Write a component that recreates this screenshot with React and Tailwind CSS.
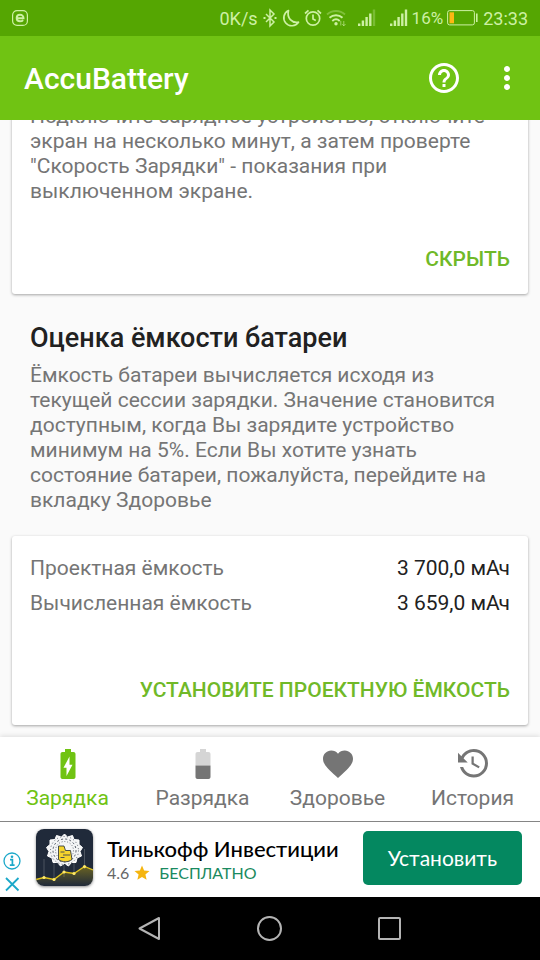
import {
    MdBattery50,
    MdBatteryChargingFull,
    MdFavorite,
    MdHelpOutline,
    MdMoreVert,
    MdStar,
} from 'react-icons/md';

const capacityRows = [
    { label: 'Проектная ёмкость', value: '3 700,0 мАч' },
    { label: 'Вычисленная ёмкость', value: '3 659,0 мАч' },
];

function HistoryIcon({ className }) {
    return (
        <svg viewBox="0 0 24 24" fill="currentColor" className={className} aria-hidden>
            <path d="M11 7v5.110l4.710 2.790.79-1.280-4-2.370V7M12.500 2C8.970 2 5.910 3.920 4.270 6.770L2 4.500V11h6.500L5.750 8.250C6.960 5.730 9.500 4 12.500 4a7.500 7.500 0 0 1 0 15c-3.270 0-6.030-2.090-7.060-5h-2.100c1.100 4.030 4.770 7 9.160 7a9.500 9.500 0 0 0 0-19Z" />
        </svg>
    );
}

const tabs = [
    { label: 'Зарядка', Icon: MdBatteryChargingFull, active: true },
    { label: 'Разрядка', Icon: MdBattery50 },
    { label: 'Здоровье', Icon: MdFavorite },
    { label: 'История', Icon: HistoryIcon },
];

function SignalIcon({ weak }) {
    return (
        <svg viewBox="0 0 18 18" className="size-[18px]" fill="currentColor" aria-hidden>
            <rect x="0" y="14.500" width="2.400" height="2.500" />
            <rect x="3.700" y="11.500" width="2.400" height="5.500" />
            <rect x="7.400" y="8" width="2.400" height="9" />
            <rect x="11.100" y="4.500" width="2.400" height="12.500" />
            <rect x="14.800" y="0.500" width="2.400" height="16.500" opacity={weak ? 0.3 : 1} />
        </svg>
    );
}

function StatusBar() {
    return (
        <div className="flex h-9 shrink-0 items-center justify-between bg-[#55a602] px-3 text-[#cdf0a4]">
            <svg viewBox="0 0 16 16" className="size-4" fill="none" stroke="currentColor" aria-hidden>
                <rect x="0.600" y="0.600" width="14.800" height="14.800" rx="4.500" strokeWidth="1.200" />
                <path d="M4.500 8.300h7C11.500 5.900 10 4.700 8 4.700S4.700 6.100 4.700 8 6.100 11.300 8 11.300c1.300 0 2.400-.4 3.100-1.200" strokeWidth="2" />
            </svg>

            <div className="flex items-center">
                <span className="text-[18px]">0K/s</span>
                <svg viewBox="0 0 16 20" className="ml-1 h-5 w-4" fill="none" stroke="currentColor" strokeWidth="1.500" aria-hidden>
                    <path d="M4 6l8 8-4 4V2l4 4-8 8" />
                    <path d="M1.500 10h2M12.500 10h2" strokeWidth="1.800" />
                </svg>
                <svg viewBox="0 0 18 18" className="ml-1 size-[18px]" fill="none" stroke="currentColor" strokeWidth="1.700" strokeLinejoin="round" aria-hidden>
                    <path d="M6.500 1.500A8 8 0 1 0 16.500 13.200C10 14.500 4.500 9 6.500 1.500Z" />
                </svg>
                <svg viewBox="0 0 18 18" className="ml-1 size-[18px]" fill="none" stroke="currentColor" strokeWidth="1.700" aria-hidden>
                    <circle cx="9" cy="9.500" r="6.700" />
                    <path d="M9 5.500V10l2.800 1.500M1 4.500l3.500-3.200M17 4.500l-3.500-3.200" />
                </svg>
                <svg viewBox="0 0 20 18" className="ml-1 h-[18px] w-5" fill="none" stroke="currentColor" strokeWidth="1.900" aria-hidden>
                    <path d="M1 5.500C6 .8 14 .8 19 5.500" opacity=".35" />
                    <path d="M3.500 8.800c3.700-3.400 9.300-3.400 13 0M6.300 12c2.200-2 5.200-2 7.400 0" />
                    <circle cx="10" cy="14.800" r="1.700" fill="currentColor" stroke="none" />
                    <path d="M14.800 12v4.500M17.800 12v5M16.300 15l1.500 1.800L19.500 15" strokeWidth="1" opacity=".6" />
                </svg>
                <div className="ml-3 flex gap-3.5">
                    <SignalIcon weak />
                    <SignalIcon />
                </div>
                <span className="ml-1 text-[17px]">16%</span>
                <svg viewBox="0 0 32 16" className="ml-1 h-4 w-8" fill="none" aria-hidden>
                    <rect x="0.600" y="0.600" width="26.800" height="14.300" rx="2" stroke="currentColor" strokeWidth="1" />
                    <rect x="2.500" y="2.300" width="4.500" height="11" fill="#fdb813" />
                    <path d="M29.800 3.500v8.500" stroke="currentColor" strokeWidth="1.600" />
                </svg>
                <span className="ml-1 text-[18px]">23:33</span>
            </div>
        </div>
    );
}

function AppBar() {
    return (
        <header className="flex h-[84px] shrink-0 items-center justify-between bg-[#70c313] pr-[15px] pl-6 text-white">
            <h1 className="text-[30px] font-medium">AccuBattery</h1>
            <div className="flex gap-[27px]">
                <button type="button" aria-label="Справка">
                    <MdHelpOutline className="size-9" />
                </button>
                <button type="button" aria-label="Меню">
                    <MdMoreVert className="size-9" />
                </button>
            </div>
        </header>
    );
}

function Card({ action, children }) {
    return (
        <section className="flex shrink-0 flex-col rounded-[3px] bg-white px-[18px] pt-5 pb-[22px] shadow-[0_1px_3px_rgba(0,0,0,0.35)]">
            {children}
            <button type="button" className="self-end text-right font-medium text-[#70b928] uppercase">
                {action}
            </button>
        </section>
    );
}

function TabBar() {
    return (
        <nav className="grid shrink-0 grid-cols-4 border-b border-[#858585] bg-white pt-[9px] pb-2.5 shadow-[0_-1px_5px_rgba(0,0,0,0.12)]">
            {tabs.map(({ label, Icon, active }) => (
                <a
                    key={label}
                    href="#"
                    aria-current={active ? 'page' : undefined}
                    className={
                        active
                            ? 'flex flex-col items-center gap-1 text-[#70c313]'
                            : 'flex flex-col items-center gap-1 text-[#757575]'
                    }
                >
                    <Icon className="size-9" />
                    {label}
                </a>
            ))}
        </nav>
    );
}

function InvestIcon() {
    return (
        <svg viewBox="0 0 57 57" className="size-[57px] shrink-0 rounded-lg shadow-[0_1px_3px_rgba(0,0,0,0.45)]" aria-hidden>
            <defs>
                <linearGradient id="glow" x1="0" y1="0" x2="0" y2="1">
                    <stop offset="0" stopColor="#d8b800" stopOpacity=".4" />
                    <stop offset="1" stopColor="#d8b800" stopOpacity="0" />
                </linearGradient>
            </defs>
            <rect width="57" height="57" fill="#202a3a" />
            <path d="M8 30v20M18 34v18M28 36v12M38 30v16M48.500 20v20" stroke="#69707a" strokeWidth=".6" />
            <path d="M0 50.500l8-2 10 2 10-7.500 10 1.500 10.500-7L57 41v16H0Z" fill="url(#glow)" />
            {/* crest */}
            <path
                d="M28.500 5l3 3 5-1.500 1.500 4 5 .5v4.500l3.500 3-2.500 4 1.500 4.500-4.500 2-1 4.500-4.500 0-3 3.500-4-2.500-4 2.500-3-3.500-4.500 0-1-4.500-4.500-2 1.500-4.500-2.500-4 3.500-3V11l5-.5 1.500-4 5 1.500Z"
                fill="#f4f5f6"
                stroke="#fff"
                strokeWidth="1"
            />
            <g fill="none" stroke="#3c4451">
                <circle cx="28.500" cy="21.500" r="14" strokeWidth=".8" strokeDasharray="1 2.400" />
                <circle cx="28.500" cy="21.500" r="11.500" strokeWidth=".9" strokeDasharray="2 2.200" />
                <circle cx="28.500" cy="21.500" r="9" strokeWidth=".7" strokeDasharray="1 1.800" />
            </g>
            <path d="M22.500 17h5.500l1.500 4.500h5l1.500 9c-4 3-9.500 3-13.500 0Z" fill="#f6d42c" stroke="#202a3a" strokeWidth=".8" />
            <path d="M24.500 23h4M27 26h7M24.500 28.500h4" stroke="#3c4451" strokeWidth=".9" />
            {/* price line */}
            <path d="M0 50.500l8-2 10 2 10-7.500 10 1.500 10.500-7L57 41" fill="none" stroke="#e2c51b" strokeWidth="1.300" />
            <g fill="#ffe96b">
                <circle cx="8" cy="48.500" r="1.600" />
                <circle cx="18" cy="50.500" r="1.600" />
                <circle cx="28" cy="43" r="1.600" />
                <circle cx="38" cy="44.500" r="1.600" />
                <circle cx="48.500" cy="37.500" r="1.600" />
            </g>
        </svg>
    );
}

function AdBanner() {
    return (
        <aside className="flex shrink-0 items-start bg-white pt-[7px] pr-[18px] pb-1 pl-[3px] font-[Lato,Roboto,sans-serif]">
            <div className="flex flex-col gap-[5px] pt-[23px] text-[#1ba8c9]">
                <button type="button" aria-label="Об этом объявлении">
                    <svg viewBox="0 0 18 18" className="size-[18px]" fill="none" stroke="currentColor" aria-hidden>
                        <circle cx="9" cy="9" r="8" strokeWidth="1.300" />
                        <path d="M7 7.700h2.400v5.300M6.800 13.200h4.800" strokeWidth="1.700" />
                        <circle cx="9" cy="4.700" r="1.300" fill="currentColor" stroke="none" />
                    </svg>
                </button>
                <button type="button" aria-label="Закрыть">
                    <svg viewBox="0 0 18 18" className="size-[18px]" stroke="currentColor" strokeWidth="1.800" aria-hidden>
                        <path d="M3 3l12.500 12.500M15.500 3L3 15.500" />
                    </svg>
                </button>
            </div>
            <div className="ml-[15px]">
                <InvestIcon />
            </div>
            <div className="ml-3.5 flex-1 pt-[7px]">
                <div className="text-[22px] leading-[25px] font-medium whitespace-nowrap text-black">
                    Тинькофф Инвестиции
                </div>
                <div className="flex items-center text-[16px] leading-6 text-[#666]">
                    4.6
                    <MdStar className="mx-1 size-[18px] text-[#f5b50f]" />
                    <span className="ml-1 text-[#1a8a60]">БЕСПЛАТНО</span>
                </div>
            </div>
            <button type="button" className="mt-0.5 rounded-[5px] bg-[#048860] px-[25px] py-[15px] text-[21px] leading-6 text-white">
                Установить
            </button>
        </aside>
    );
}

function SystemNav() {
    return (
        <div className="flex h-[63px] shrink-0 items-center justify-center gap-[92px] bg-black text-[#b4b4b4]">
            <button type="button" aria-label="Назад">
                <svg viewBox="0 0 28 28" className="size-7" fill="none" stroke="currentColor" strokeWidth="2" strokeLinejoin="round" aria-hidden>
                    <path d="M3.500 13.500L23 3v21Z" />
                </svg>
            </button>
            <button type="button" aria-label="Домой">
                <svg viewBox="0 0 28 28" className="size-7" fill="none" stroke="currentColor" strokeWidth="2" aria-hidden>
                    <circle cx="13.500" cy="13.500" r="11.500" />
                </svg>
            </button>
            <button type="button" aria-label="Недавние">
                <svg viewBox="0 0 28 28" className="size-7" fill="none" stroke="currentColor" strokeWidth="2" aria-hidden>
                    <rect x="3" y="3" width="21" height="21" rx="1" />
                </svg>
            </button>
        </div>
    );
}

export default function App() {
    return (
        <div className="flex h-screen flex-col bg-[#fafafa] font-[Roboto,sans-serif] text-[21px] leading-[25px] text-[#757575]">
            <StatusBar />
            <AppBar />

            <main className="flex min-h-0 flex-1 flex-col justify-end overflow-hidden px-3 pb-3">
                <Card action="Скрыть">
                    <p className="mb-[43px]">
                        Подключите зарядное устройство, отключите экран на
                        несколько минут, а затем проверте "Скорость Зарядки" -
                        показания при выключенном экране.
                    </p>
                </Card>

                <div className="shrink-0 px-[18px] pt-7 pb-[23px]">
                    <h2 className="mb-[9px] text-[27px] leading-8 font-medium text-[#212121]">
                        Оценка ёмкости батареи
                    </h2>
                    <p>
                        Ёмкость батареи вычисляется исходя из текущей сессии
                        зарядки. Значение становится доступным, когда Вы
                        зарядите устройство минимум на 5%. Если Вы хотите
                        узнать состояние батареи, пожалуйста, перейдите на
                        вкладку Здоровье
                    </p>
                </div>

                <Card action="Установите проектную ёмкость">
                    <dl className="mb-[62px] flex flex-col gap-2.5">
                        {capacityRows.map((row) => (
                            <div key={row.label} className="flex justify-between">
                                <dt>{row.label}</dt>
                                <dd className="text-[#212121]">{row.value}</dd>
                            </div>
                        ))}
                    </dl>
                </Card>
            </main>

            <TabBar />
            <AdBanner />
            <SystemNav />
        </div>
    );
}
